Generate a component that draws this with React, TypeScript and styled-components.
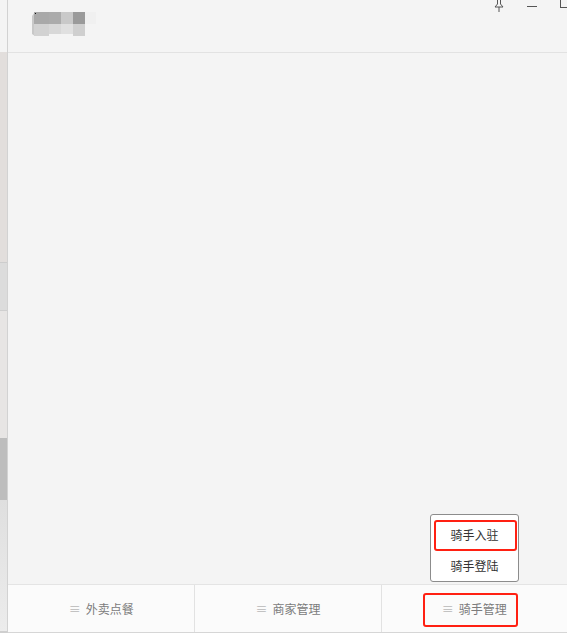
import React from "react";
import styled, { createGlobalStyle } from "styled-components";

const GlobalStyle = createGlobalStyle`
  html, body {
    margin: 0;
    padding: 0;
    background: #f4f4f4;
  }
  #root {
    height: 633px;
  }
  * {
    box-sizing: border-box;
  }
`;

const Shell = styled.div`
  display: flex;
  width: 567px;
  height: 633px;
  overflow: hidden;
  font-family: "Noto Sans CJK SC", "Noto Sans", sans-serif;
`;

const LeftRail = styled.div`
  width: 8px;
  display: flex;
  flex-direction: column;
  border-right: 1px solid #d2d2d2;
  border-bottom: 2px solid #cfcfcf;
`;

const RailPiece = styled.div<{ $h: number; $bg: string }>`
  height: ${(p) => p.$h}px;
  flex: ${(p) => (p.$h === 0 ? 1 : "none")};
  background: ${(p) => p.$bg};
`;

const Main = styled.div`
  flex: 1;
  display: flex;
  flex-direction: column;
  background: #f4f4f4;
`;

const Header = styled.div`
  height: 53px;
  flex: none;
  border-bottom: 1px solid #e2e2e2;
  position: relative;
  padding: 12px 0 0 24px;
`;

const WindowControls = styled.div`
  position: absolute;
  top: -3px;
  right: -4px;
  display: flex;
  align-items: flex-start;
  gap: 21px;
`;

const Content = styled.div`
  flex: 1;
  position: relative;
`;

const TabBar = styled.div`
  height: 49px;
  flex: none;
  display: grid;
  grid-template-columns: 1fr 1fr 1fr;
  background: #fbfbfb;
  border-top: 1px solid #e4e4e4;
  border-bottom: 1px solid #d6d6d6;
`;

const Tab = styled.div`
  display: flex;
  align-items: center;
  justify-content: center;
  gap: 5px;
  font-size: 12px;
  color: #7c7c7c;
  & + & {
    border-left: 1px solid #e2e2e2;
  }
`;

const TabIcon = styled.span`
  color: #b8b8b8;
  font-size: 12px;
`;

const Popup = styled.div`
  position: absolute;
  right: 48px;
  bottom: 2px;
  width: 89px;
  background: #fff;
  border: 1px solid #8c8c8c;
  border-radius: 3px;
  display: flex;
  flex-direction: column;
  padding: 4px 0 0;
`;

const PopupItem = styled.div`
  height: 31px;
  display: flex;
  align-items: center;
  justify-content: center;
  font-size: 12px;
  color: #333;
`;

const Highlight = styled.div<{ $x: number; $y: number; $w: number; $h: number }>`
  position: absolute;
  left: ${(p) => p.$x}px;
  top: ${(p) => p.$y}px;
  width: ${(p) => p.$w}px;
  height: ${(p) => p.$h}px;
  border: 2px solid #ff2012;
  border-radius: 3px;
  pointer-events: none;
`;

function BlurredLogo() {
  const blocks = [
    { x: 0, y: 0, w: 15, h: 12, c: "#a9a9a9" },
    { x: 15, y: 0, w: 12, h: 12, c: "#ababab" },
    { x: 27, y: 0, w: 12, h: 12, c: "#c9c9c9" },
    { x: 39, y: 0, w: 12, h: 12, c: "#9a9a9a" },
    { x: 51, y: 0, w: 12, h: 12, c: "#f0f0f0" },
    { x: 0, y: 12, w: 15, h: 12, c: "#d2d2d2" },
    { x: 15, y: 12, w: 12, h: 10, c: "#d8d8d8" },
    { x: 27, y: 12, w: 12, h: 10, c: "#e0e0e0" },
    { x: 39, y: 12, w: 12, h: 12, c: "#cfcfcf" },
  ];
  return (
    <svg width="64" height="24" viewBox="0 0 64 24">
      <polygon points="0,4 3,0 3,24 0,22" fill="#c8c8c8" />
      {blocks.map((b, i) => (
        <rect key={i} x={b.x + 2} y={b.y} width={b.w} height={b.h} fill={b.c} />
      ))}
      <rect x="3" y="1" width="1" height="1" fill="#111" />
    </svg>
  );
}

function PinIcon() {
  return (
    <svg width="12" height="16" viewBox="0 0 12 16" fill="none" stroke="#555" strokeWidth="1">
      <path d="M3.5 1.5 L8.5 1.5 M4.5 1.5 L4.5 7 L2 10 L10 10 L7.5 7 L7.5 1.5 M6 10 L6 15" />
    </svg>
  );
}

function MinIcon() {
  return (
    <svg width="12" height="16" viewBox="0 0 12 16">
      <rect x="1" y="9" width="10" height="1" fill="#555" />
    </svg>
  );
}

function MaxIcon() {
  return (
    <svg width="12" height="16" viewBox="0 0 12 16" fill="none" stroke="#555" strokeWidth="1">
      <rect x="1.5" y="2.5" width="9" height="8" />
    </svg>
  );
}

const rail = [
  { h: 52, bg: "#f4f4f4" },
  { h: 210, bg: "#e2dedc" },
  { h: 1, bg: "#cdcdcd" },
  { h: 47, bg: "#dcdcdc" },
  { h: 1, bg: "#cfcfcf" },
  { h: 127, bg: "#e7e5e4" },
  { h: 62, bg: "#bdbdbd" },
  { h: 0, bg: "linear-gradient(#dfdfdf, #ececec)" },
];

export default function App() {
  return (
    <>
      <GlobalStyle />
      <Shell>
        <LeftRail>
          {rail.map((r, i) => (
            <RailPiece key={i} $h={r.h} $bg={r.bg} />
          ))}
        </LeftRail>
        <Main>
          <Header>
            <BlurredLogo />
            <WindowControls>
              <PinIcon />
              <MinIcon />
              <MaxIcon />
            </WindowControls>
          </Header>
          <Content>
            <Popup>
              <PopupItem>骑手入驻</PopupItem>
              <PopupItem>骑手登陆</PopupItem>
            </Popup>
          </Content>
          <TabBar>
            <Tab>
              <TabIcon>≡</TabIcon>外卖点餐
            </Tab>
            <Tab>
              <TabIcon>≡</TabIcon>商家管理
            </Tab>
            <Tab>
              <TabIcon>≡</TabIcon>骑手管理
            </Tab>
          </TabBar>
        </Main>
      </Shell>
      <Highlight $x={434} $y={520} $w={83} $h={31} />
      <Highlight $x={423} $y={593} $w={95} $h={34} />
    </>
  );
}
